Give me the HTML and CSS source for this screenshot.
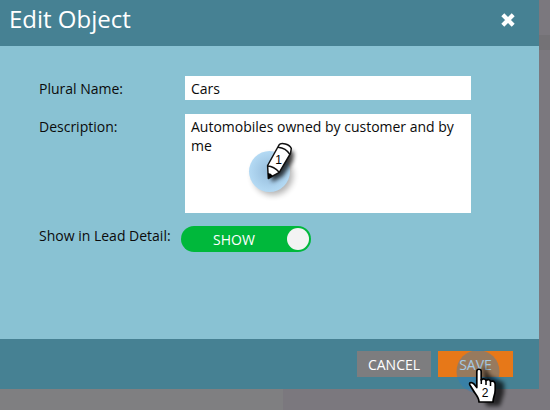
FILE: index.html
```html
<!DOCTYPE html>
<html lang="en">
<head>
<meta charset="utf-8">
<title>Edit Object</title>
<link rel="stylesheet" href="styles.css">
</head>
<body>
<section class="dialog">
  <header class="header">
    <h1 class="title">Edit Object</h1>
    <svg class="close" width="16" height="16" viewBox="0 0 16 16"><path d="M2.800 2.800L13.200 13.200M13.200 2.800L2.800 13.200"/></svg>
  </header>
  <main class="form">
    <div class="row name-row"><span class="label name-label">Plural Name:</span><div class="field">Cars</div></div>
    <div class="row desc-row"><span class="label desc-label">Description:</span><div class="field area">Automobiles owned by customer and by me</div></div>
    <div class="row show-row"><span class="label show-label">Show in Lead Detail:</span><div class="toggle"><span class="state">SHOW</span><span class="knob"></span></div></div>
  </main>
  <footer class="footer">
    <div class="button cancel"><span>CANCEL</span></div>
    <div class="button save"><span>SAVE</span></div>
  </footer>
</section>
<div class="backdrop-bottom"></div>
<svg class="marker pencil-marker" width="80" height="75" viewBox="0 0 80 75">
  <defs>
    <filter id="soft" x="-50%" y="-50%" width="200%" height="200%"><feGaussianBlur stdDeviation="3"/></filter>
    <filter id="shade" x="-50%" y="-50%" width="200%" height="200%"><feGaussianBlur stdDeviation="2.2"/></filter>
    <radialGradient id="halo"><stop offset="0" stop-color="#94bbda"/><stop offset="1" stop-color="#b4daf4"/></radialGradient>
  </defs>
  <circle cx="38" cy="45" r="20" fill="#000" opacity=".3" filter="url(#soft)"/>
  <circle cx="34.500" cy="41.500" r="20.500" fill="url(#halo)"/>
  <path d="M37 52L36 38L46 18L59 22L58 31L48 46Z" fill="#000" opacity=".75" filter="url(#shade)"/>
  <path d="M33.300 48.500L32.600 35.500L44 15C46 11.800 55 14.200 56.300 18.500L55.500 23.500L44.300 42.300Z" fill="#fff" stroke="#111" stroke-width="1.500" stroke-linejoin="round"/>
  <path d="M43 17.200Q51 18 55 24.500M32.600 36Q39 36.500 44.200 42.200" fill="none" stroke="#111" stroke-width="1.500"/>
  <path d="M33.200 48.500L32.900 43Q36 43.300 37.900 45.900Z"/>
  <text class="number" x="43.500" y="34">1</text>
</svg>
<svg class="marker hand-marker" width="70" height="60" viewBox="0 0 70 60">
  <circle cx="28" cy="21.500" r="21.500" fill="#297fc2" opacity=".42"/>
  <path d="M33 14L34 28L29 34L33 48L37 56H50L54 43V33L40 26Z" fill="#000" opacity=".7" filter="url(#shade)"/>
  <path d="M26.800 21.500C26.800 18.500 31.200 18.500 31.200 21.500V30Q34.500 27.700 36 30.500Q39.500 28.500 40.500 31.500Q44.800 30 45.200 34.500V40C45.200 45 43 47 43 52H29C29 47 25 44 23 40L20.500 36C18 33 21 31.300 24 34L26.800 37.500Z" fill="#fff" stroke="#000" stroke-width="1.700" stroke-linejoin="round"/>
  <path d="M31.300 29V34M36 30V35M40.500 31.500V36" fill="none" stroke="#000" stroke-width="1.500"/>
  <text class="number" x="35" y="47.300">2</text>
</svg>
</body>
</html>
```
FILE: styles.css
```css
* { box-sizing: border-box; }
body {
  margin: 0;
  width: 550px;
  height: 410px;
  overflow: hidden;
  position: relative;
  background: linear-gradient(#7b787e 0 35px, #747276 35px 50px, #7b787e 50px);
  font: 14px/19px "Open Sans", "Noto Sans", sans-serif;
  color: #0b0b0b;
}
.dialog { width: 539px; height: 389px; display: flex; flex-direction: column; background: #89c2d3; }
.header { height: 46px; padding: 0 23px 6px 9px; display: flex; align-items: center; justify-content: space-between; background: #468193; }
.title { margin: 0 0 2px; font-size: 24px; line-height: 32px; font-weight: 400; color: #fff; }
.close { fill: none; stroke: #fff; stroke-width: 4.2; }
.form { height: 293px; padding: 30px 0 0 39px; }
.row { display: grid; grid-template-columns: 146px 286px; align-items: start; }
.label { white-space: nowrap; }
.name-label, .desc-label { padding-top: 3px; }
.name-row { height: 38px; }
.desc-row { height: 112px; }
.show-row { grid-template-columns: 142px 130px; }
.field { height: 24px; padding: 3px 6px; background: #fff; }
.area { height: 99px; line-height: 19px; }
.toggle { height: 26px; padding: 0 2px 0 32px; display: flex; align-items: center; justify-content: space-between; border-radius: 13px; background: #00b83b; color: #fff; }
.knob { width: 22px; height: 22px; border-radius: 50%; background: #f3f3f3; }
.footer { height: 50px; padding: 12px 26px 0 0; display: flex; justify-content: flex-end; gap: 7px; background: #468193; }
.button { height: 26px; display: flex; align-items: center; justify-content: center; color: #fff; }
.cancel { width: 74px; background: #7d7d7f; }
.save { width: 75px; background: #e77818; }
.backdrop-bottom { width: 283px; height: 21px; background: #7f7f81; }
.marker { position: absolute; overflow: visible; }
.pencil-marker { left: 235px; top: 130px; }
.hand-marker { left: 450px; top: 350px; }
.number { font: 12px "Liberation Sans", sans-serif; text-anchor: middle; }
```
